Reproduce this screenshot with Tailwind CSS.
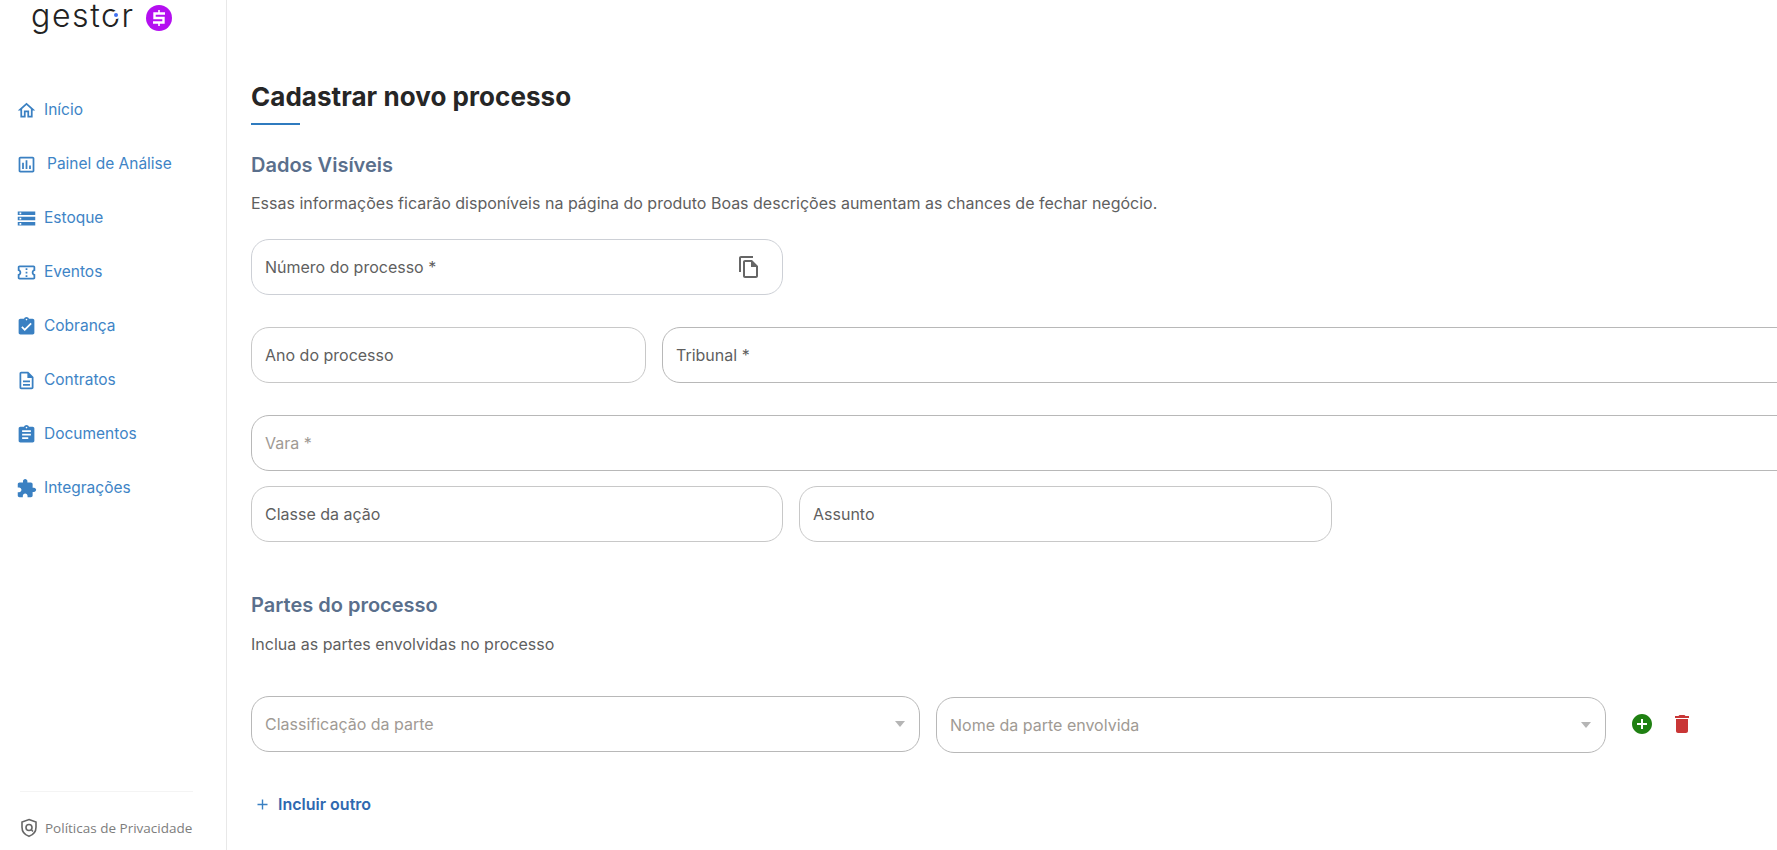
<!DOCTYPE html>
<html lang="pt-BR">
<head>
    <meta charset="UTF-8">
    <meta name="viewport" content="width=device-width, initial-scale=1.0">
    <title>Cadastrar novo processo</title>
    <script src="https://cdn.jsdelivr.net/npm/@tailwindcss/browser@4"></script>
</head>
<body class="bg-white font-['Inter',sans-serif] overflow-hidden">
    <div class="flex h-[850px] w-[1777px] overflow-hidden">
        <!-- Sidebar -->
        <aside class="w-[227px] shrink-0 border-r border-[#e8e8e8] flex flex-col">
            <div class="h-[83px] pl-[31px] flex items-start gap-[11px]">
                <span class="relative font-light text-[32px] leading-[32px] tracking-[1.6px] text-[#222]">gestor<span class="absolute left-[81px] top-[11px] w-[8px] h-[8px] rounded-full bg-[#3f6ff0] border-2 border-white"></span></span>
                <svg class="w-[26px] h-[26px] mt-[5px]" viewBox="0 0 26 26">
                    <circle cx="13" cy="13" r="13" fill="#b40ff0"/>
                    <path d="M19 8.5H8.5v4.5h9v4.5H7" fill="none" stroke="#fff" stroke-width="2.4"/>
                    <path d="M13 5v3M13 18v3" stroke="#fff" stroke-width="1.6"/>
                </svg>
            </div>
            <nav class="flex flex-col text-[15.5px] text-[#3e84c6]">
                <a class="h-[54px] pl-[16px] flex items-center gap-[7px]">
                    <svg class="w-[21px] h-[21px] fill-[#3a80c2]" viewBox="0 0 24 24"><path d="M12 5.69l5 4.5V18h-2v-6H9v6H7v-7.81l5-4.5M12 3L2 12h3v8h6v-6h2v6h6v-8h3L12 3z"/></svg>
                    Início
                </a>
                <a class="h-[54px] pl-[16px] flex items-center gap-[10px]">
                    <svg class="w-[21px] h-[21px] fill-[#3a80c2]" viewBox="0 0 24 24"><path d="M19 3H5c-1.1 0-2 .9-2 2v14c0 1.1.9 2 2 2h14c1.1 0 2-.9 2-2V5c0-1.1-.9-2-2-2zm0 16H5V5h14v14zM7 10h2v7H7zm4-3h2v10h-2zm4 6h2v4h-2z"/></svg>
                    Painel de Análise
                </a>
                <a class="h-[54px] pl-[16px] flex items-center gap-[7px]">
                    <svg class="w-[21px] h-[21px] fill-[#3a80c2]" viewBox="0 0 24 24"><path d="M2 20h20v-4H2v4zm2-3h2v2H4v-2zM2 4v4h20V4H2zm4 3H4V5h2v2zm-4 7h20v-4H2v4zm2-3h2v2H4v-2z"/></svg>
                    Estoque
                </a>
                <a class="h-[54px] pl-[16px] flex items-center gap-[7px]">
                    <svg class="w-[21px] h-[21px] fill-[#3a80c2]" viewBox="0 0 24 24"><path d="M22 10V6c0-1.11-.9-2-2-2H4c-1.1 0-1.99.89-1.99 2v4c1.1 0 1.99.9 1.99 2s-.89 2-2 2v4c0 1.1.9 2 2 2h16c1.1 0 2-.9 2-2v-4c-1.1 0-2-.9-2-2s.9-2 2-2zm-2-1.46c-1.19.69-2 1.99-2 3.46s.81 2.77 2 3.46V18H4v-2.54c1.19-.69 2-1.99 2-3.46 0-1.48-.8-2.77-1.99-3.46L4 6h16v2.54zM11 15h2v2h-2zm0-4h2v2h-2zm0-4h2v2h-2z"/></svg>
                    Eventos
                </a>
                <a class="h-[54px] pl-[16px] flex items-center gap-[7px]">
                    <svg class="w-[21px] h-[21px] fill-[#3a80c2]" viewBox="0 0 24 24"><path d="M19 3h-4.18C14.4 1.84 13.3 1 12 1c-1.3 0-2.4.84-2.82 2H5c-1.1 0-2 .9-2 2v14c0 1.1.9 2 2 2h14c1.1 0 2-.9 2-2V5c0-1.1-.9-2-2-2zm-7 0c.55 0 1 .45 1 1s-.45 1-1 1-1-.45-1-1 .45-1 1-1zm-2 14l-4-4 1.41-1.41L10 14.17l6.59-6.59L18 9l-8 8z"/></svg>
                    Cobrança
                </a>
                <a class="h-[54px] pl-[16px] flex items-center gap-[7px]">
                    <svg class="w-[21px] h-[21px] fill-[#3a80c2]" viewBox="0 0 24 24"><path d="M8 16h8v2H8zm0-4h8v2H8zm6-10H6c-1.1 0-2 .9-2 2v16c0 1.1.89 2 1.99 2H18c1.1 0 2-.9 2-2V8l-6-6zm4 18H6V4h7v5h5v11z"/></svg>
                    Contratos
                </a>
                <a class="h-[54px] pl-[16px] flex items-center gap-[7px]">
                    <svg class="w-[21px] h-[21px] fill-[#3a80c2]" viewBox="0 0 24 24"><path d="M19 3h-4.18C14.4 1.84 13.3 1 12 1c-1.3 0-2.4.84-2.82 2H5c-1.1 0-2 .9-2 2v14c0 1.1.9 2 2 2h14c1.1 0 2-.9 2-2V5c0-1.1-.9-2-2-2zm-7 0c.55 0 1 .45 1 1s-.45 1-1 1-1-.45-1-1 .45-1 1-1zm2 14H7v-2h7v2zm3-4H7v-2h10v2zm0-4H7V7h10v2z"/></svg>
                    Documentos
                </a>
                <a class="h-[54px] pl-[16px] flex items-center gap-[7px]">
                    <svg class="w-[21px] h-[21px] fill-[#3a80c2]" viewBox="0 0 24 24"><path d="M20.5 11H19V7c0-1.1-.9-2-2-2h-4V3.5C13 2.12 11.88 1 10.5 1S8 2.12 8 3.5V5H4c-1.1 0-1.99.9-1.99 2v3.8H3.5c1.49 0 2.7 1.21 2.7 2.7s-1.21 2.7-2.7 2.7H2V20c0 1.1.9 2 2 2h3.8v-1.5c0-1.49 1.21-2.7 2.7-2.7 1.49 0 2.7 1.21 2.7 2.7V22H17c1.1 0 2-.9 2-2v-4h1.5c1.38 0 2.5-1.12 2.5-2.5S21.88 11 20.5 11z"/></svg>
                    Integrações
                </a>
            </nav>
            <div class="mt-auto mx-[20px] mb-[12px] w-[173px] border-t border-[#f4f4f4] pt-[26px] flex items-center gap-[7px] font-['Open_Sans',sans-serif] text-[13.5px] leading-[20px] whitespace-nowrap text-[#7d7d7d]">
                <svg class="w-[18px] h-[20px] shrink-0" viewBox="0 0 18 20" fill="none" stroke="#666" stroke-width="1.6">
                    <path d="M9 1.5l7 2.6v5.2c0 4.2-2.9 7.6-7 9-4.1-1.4-7-4.8-7-9V4.100z"/>
                    <circle cx="9" cy="9.500" r="3"/>
                    <path d="M11.500 12l1.500 1.500"/>
                </svg>
                Políticas de Privacidade
            </div>
        </aside>

        <!-- Main form -->
        <main class="flex-1 min-w-0 pl-[24px] pt-[80px] text-[16px] text-[#5f5f5f]">
            <h1 class="text-[26px] leading-[34px] font-bold tracking-[0.05px] text-[#262626]">Cadastrar novo processo</h1>
            <div class="mt-[9px] w-[49px] h-[2px] bg-[#2f7bbf]"></div>

            <h2 class="mt-[27px] text-[20px] leading-[26px] font-semibold text-[#5a6f8c]">Dados Visíveis</h2>
            <p class="mt-[13px] leading-[24px]">Essas informações ficarão disponíveis na página do produto Boas descrições aumentam as chances de fechar negócio.</p>

            <div class="mt-[24px] w-[532px] h-[56px] px-[13px] border border-[#cdd0d6] rounded-[18px] flex items-center justify-between">
                <span>Número do processo *</span>
                <svg class="w-[24px] h-[24px] mr-[8px] fill-[#666]" viewBox="0 0 24 24"><path d="M16 1H4c-1.1 0-2 .9-2 2v14h2V3h12V1zm-1 4H8c-1.1 0-1.99.9-1.99 2L6 21c0 1.1.89 2 1.99 2H19c1.1 0 2-.9 2-2V11l-6-6zM8 21V7h6v5h5v9H8z"/></svg>
            </div>

            <div class="mt-[32px] flex gap-[16px] w-[1700px]">
                <div class="w-[395px] h-[56px] px-[13px] border border-[#c8c8c8] rounded-[18px] flex items-center">Ano do processo</div>
                <div class="w-[1200px] h-[56px] px-[13px] border border-[#b8b8b8] rounded-[18px] flex items-center">Tribunal *</div>
            </div>

            <div class="mt-[32px] w-[1700px] h-[56px] px-[13px] border border-[#b8b8b8] rounded-[18px] flex items-center text-[#a09a94]">Vara *</div>

            <div class="mt-[15px] flex gap-[16px]">
                <div class="w-[532px] h-[56px] px-[13px] border border-[#c8c8c8] rounded-[18px] flex items-center">Classe da ação</div>
                <div class="w-[533px] h-[56px] px-[13px] border border-[#c8c8c8] rounded-[18px] flex items-center">Assunto</div>
            </div>

            <h2 class="mt-[50px] text-[20px] leading-[26px] font-semibold text-[#5a6f8c]">Partes do processo</h2>
            <p class="mt-[14px] leading-[24px]">Inclua as partes envolvidas no processo</p>

            <div class="mt-[40px] flex items-start gap-[16px]">
                <div class="w-[669px] h-[56px] pl-[13px] pr-[14px] border border-[#b8b8b8] rounded-[18px] flex items-center justify-between text-[#a09a94]">
                    Classificação da parte
                    <span class="w-0 h-0 border-x-[5px] border-x-transparent border-t-[6px] border-t-[#b5b5b5]"></span>
                </div>
                <div class="mt-[1px] w-[670px] h-[56px] pl-[13px] pr-[14px] border border-[#b8b8b8] rounded-[18px] flex items-center justify-between text-[#a09a94]">
                    Nome da parte envolvida
                    <span class="w-0 h-0 border-x-[5px] border-x-transparent border-t-[6px] border-t-[#b5b5b5]"></span>
                </div>
                <div class="ml-[8px] h-[56px] flex items-center gap-[16px]">
                    <svg class="w-[24px] h-[24px] fill-[#1f8012]" viewBox="0 0 24 24"><path d="M12 2C6.48 2 2 6.480 2 12s4.480 10 10 10 10-4.480 10-10S17.520 2 12 2zm5 11h-4v4h-2v-4H7v-2h4V7h2v4h4v2z"/></svg>
                    <svg class="w-[24px] h-[24px] fill-[#c93636]" viewBox="0 0 24 24"><path d="M6 19c0 1.100.9 2 2 2h8c1.100 0 2-.9 2-2V7H6v12zM19 4h-3.500l-1-1h-5l-1 1H5v2h14V4z"/></svg>
                </div>
            </div>

            <div class="mt-[39px] pl-[6px] flex items-center gap-[10px] text-[16px] font-semibold text-[#2f69b0]">
                <svg class="w-[11px] h-[11px]" viewBox="0 0 11 11" stroke="#3a80c2" stroke-width="1.4"><path d="M5.500 0.500v10M0.500 5.500h10"/></svg>
                Incluir outro
            </div>
        </main>
    </div>
</body>
</html>
